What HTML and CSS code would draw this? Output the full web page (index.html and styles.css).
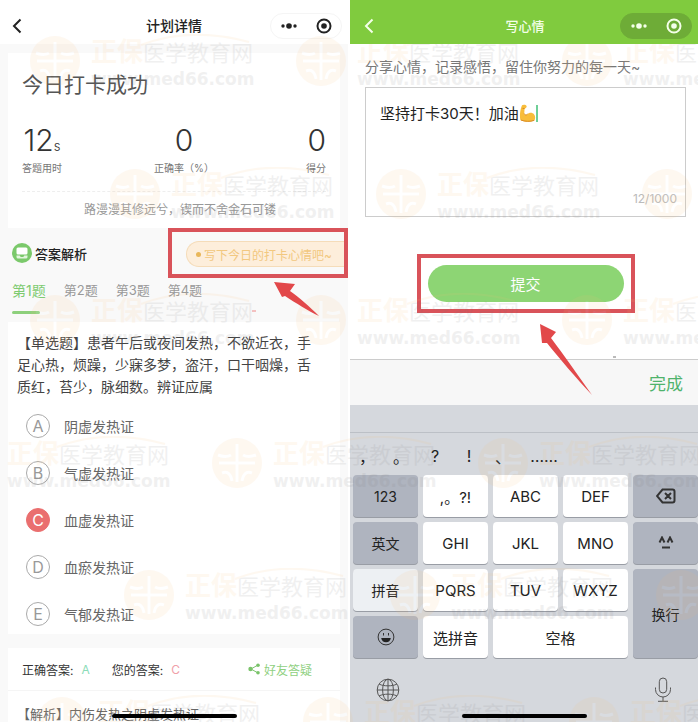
FILE: index.html
```html
<!DOCTYPE html>
<html lang="zh-CN">
  <head>
    <meta charset="UTF-8" />
    <meta name="viewport" content="width=device-width, initial-scale=1.0" />
    <title>打卡心情</title>
    <link rel="stylesheet" href="styles.css" />
  </head>
  <body>
    <div class="screens">
      <section class="screen plan">
        <header class="navbar">
          <button class="back" aria-label="返回">
            <svg width="10" height="16" viewBox="0 0 10 16"><path d="M8.500 1.500L2 8l6.500 6.500" /></svg>
          </button>
          <h1>计划详情</h1>
          <div class="capsule">
            <button aria-label="更多">
              <svg width="18" height="8" viewBox="0 0 18 8"><circle cx="3" cy="4" r="1.700" /><circle cx="9" cy="4" r="2.800" /><circle cx="15" cy="4" r="1.700" /></svg>
            </button>
            <button aria-label="关闭">
              <svg width="16" height="16" viewBox="0 0 16 16"><circle class="ring" cx="8" cy="8" r="6.500" /><circle cx="8" cy="8" r="2.800" /></svg>
            </button>
          </div>
        </header>

        <main class="plan-body">
          <div class="card result">
            <h2>今日打卡成功</h2>
            <div class="stats">
              <div class="stat"><p class="num">12<small>s</small></p><p class="label">答题用时</p></div>
              <div class="stat"><p class="num">0</p><p class="label">正确率（%）</p></div>
              <div class="stat right"><p class="num">0</p><p class="label">得分</p></div>
            </div>
            <p class="quote">路漫漫其修远兮，锲而不舍金石可镂</p>
          </div>

          <div class="analysis">
            <svg width="20" height="20" viewBox="0 0 20 20">
              <circle cx="10" cy="10" r="10" fill="#7bc96b" />
              <rect x="4.500" y="4.500" width="11" height="7" rx="1.500" fill="#fff" />
              <path d="M4.500 12.500h3.200l1 1.500h2.600l1-1.500h3.200v1.500a1.500 1.500 0 0 1-1.500 1.500H6a1.500 1.500 0 0 1-1.500-1.500z" fill="#e2f5dd" />
            </svg>
            <h3>答案解析</h3>
            <div class="marked mood-box">
              <button class="mood"><i></i>写下今日的打卡心情吧~</button>
            </div>
            <svg class="arrow arrow-mood" width="70" height="40" viewBox="0 0 70 40">
              <path d="M24 5l21 2-5 7c9 6 20 16 29 25-11-5-23-13-34-20l-3 1z" fill="#e2484a" />
              <path d="M2 34h4" stroke="#e88" />
            </svg>
          </div>

          <nav class="tabs">
            <a class="active" href="#q1">第1题</a>
            <a href="#q2">第2题</a>
            <a href="#q3">第3题</a>
            <a href="#q4">第4题</a>
          </nav>

          <div class="card question" id="q1">
            <p class="stem">【单选题】患者午后或夜间发热，不欲近衣，手足心热，烦躁，少寐多梦，盗汗，口干咽燥，舌质红，苔少，脉细数。辨证应属</p>
            <ul class="options">
              <li><button><b>A</b>阴虚发热证</button></li>
              <li><button><b>B</b>气虚发热证</button></li>
              <li><button class="wrong"><b>C</b>血虚发热证</button></li>
              <li><button><b>D</b>血瘀发热证</button></li>
              <li><button><b>E</b>气郁发热证</button></li>
            </ul>
          </div>

          <div class="card answer">
            <div class="answer-row">
              <span>正确答案:</span><em class="ok">A</em>
              <span>您的答案:</span><em class="bad">C</em>
              <a class="share" href="#share">
                <svg width="12" height="12" viewBox="0 0 12 12"><path d="M10 2L3 6l7 4" fill="none" stroke="#7ac36a" /><circle cx="2.500" cy="6" r="2.200" /><circle cx="10" cy="2.200" r="1.800" /><circle cx="10" cy="9.800" r="1.800" /></svg>
                好友答疑
              </a>
            </div>
            <p class="explain">【解析】内伤发热之阴虚发热证</p>
          </div>
        </main>
        <span class="home-bar"></span>
      </section>

      <section class="screen write">
        <header class="navbar green">
          <button class="back" aria-label="返回">
            <svg width="10" height="16" viewBox="0 0 10 16"><path d="M8.500 1.500L2 8l6.500 6.500" /></svg>
          </button>
          <h1>写心情</h1>
          <div class="capsule">
            <button aria-label="更多">
              <svg width="18" height="8" viewBox="0 0 18 8"><circle cx="3" cy="4" r="1.700" /><circle cx="9" cy="4" r="2.800" /><circle cx="15" cy="4" r="1.700" /></svg>
            </button>
            <button aria-label="关闭">
              <svg width="16" height="16" viewBox="0 0 16 16"><circle class="ring" cx="8" cy="8" r="6.500" /><circle cx="8" cy="8" r="2.800" /></svg>
            </button>
          </div>
        </header>

        <main class="write-body">
          <label for="mood">分享心情，记录感悟，留住你努力的每一天~</label>
          <div class="field">
            <textarea id="mood">坚持打卡30天！加油</textarea>
            <svg class="muscle" width="20" height="19" viewBox="0 0 20 19">
              <path d="M3 1.200C4.500.2 7 .6 7.600 2c.4 1.200-.6 2.300-2 2.500L5.200 10c.8 1.300 2.200 1.300 3.200.2 1.600-2 5-2 6.600 0 1.500 2 1.500 4.600.3 6.300-4 1.800-10.500 1.700-13.800-.5C.3 12 1.200 5.500 3 1.200z" fill="#f8bd3a" />
              <path d="M5.200 9.500c.6 1.800 2.200 1.800 3.300.6M3.600 4.400l2 .1M1.800 16c4 1.600 9.500 1.800 13.400.4" fill="none" stroke="#d98a24" />
              <path d="M18 1v17" stroke="#6fcf97" stroke-width="2" />
            </svg>
            <span class="count">12/1000</span>
          </div>
          <div class="marked submit-box">
            <button class="submit">提交</button>
          </div>
          <svg class="arrow arrow-submit" width="80" height="74" viewBox="0 0 80 74">
            <path d="M0 0l16 8-5 6c12 16 27 37 41 57C36 54 20 35 7 19l-5 0z" fill="#e2484a" />
            <path d="M73 33h3" stroke="#777" />
          </svg>
        </main>

        <div class="toolbar"><button>完成</button></div>
        <div class="keyboard">
          <div class="candidates">
            <button>，</button><button>。</button><button>?</button><button>!</button><button>、</button><button>……</button>
          </div>
          <div class="keys">
            <button class="dark">123</button>
            <button>,。?!</button>
            <button>ABC</button>
            <button>DEF</button>
            <button class="dark" aria-label="删除">
              <svg width="20" height="16" viewBox="0 0 20 16"><path d="M6.500 1.500h10a2 2 0 0 1 2 2v9a2 2 0 0 1-2 2h-10L1 8zM9 5l6 6M15 5l-6 6" /></svg>
            </button>
            <button class="dark">英文</button>
            <button>GHI</button>
            <button>JKL</button>
            <button>MNO</button>
            <button class="dark" aria-label="颜文字">
              <svg width="16" height="14" viewBox="0 0 16 14"><path d="M1.500 6.500L4 1.500l2.500 5M9.500 6.500L12 1.500l2.500 5M4 11.500h8" /></svg>
            </button>
            <button class="light">拼音</button>
            <button>PQRS</button>
            <button>TUV</button>
            <button>WXYZ</button>
            <button class="dark enter">换行</button>
            <button class="dark" aria-label="表情">
              <svg class="smile" width="18" height="18" viewBox="0 0 18 18"><circle cx="9" cy="9" r="7.900" /><path d="M4.200 10h9.600c-.4 2.800-2.200 4.300-4.800 4.300S4.600 12.800 4.200 10z" fill="#222" stroke="none" /><path d="M6.500 5v2.500M11.500 5v2.500" /></svg>
            </button>
            <button>选拼音</button>
            <button class="space">空格</button>
          </div>
          <div class="bottom-keys">
            <button aria-label="切换键盘">
              <svg width="24" height="24" viewBox="0 0 24 24"><circle cx="12" cy="12" r="10.800" /><ellipse cx="12" cy="12" rx="5.400" ry="10.800" /><path d="M12 1v22M1.200 12h21.600M3.200 6.200c5 2.200 12.600 2.200 17.600 0M3.200 17.800c5-2.200 12.600-2.200 17.600 0" /></svg>
            </button>
            <button aria-label="语音">
              <svg width="18" height="26" viewBox="0 0 18 26"><rect x="5.300" y="1" width="7.400" height="15" rx="3.700" /><path d="M1.500 10.500v2a7.500 7.500 0 0 0 15 0v-2M9 20v4M4 24.300h10" /></svg>
            </button>
          </div>
        </div>
        <span class="home-bar"></span>
      </section>

      <div class="watermarks" aria-hidden="true"></div>
    </div>

    <template id="mark">
      <div class="mark">
        <svg width="50" height="50" viewBox="0 0 50 50">
          <circle cx="25" cy="25" r="25" fill="#f9bd74" />
          <path d="M25 6v38M7 25h36M6 17q8 3 13 0M44 17q-8 3-13 0M10 35q8-3 10 8M40 35q-8-3-10 8" fill="none" stroke="#fff" stroke-width="3" />
        </svg>
        <div>
          <p class="brand"><b>正保</b>医学教育网</p>
          <p class="site">www.med66.com</p>
        </div>
        <svg class="swoosh" width="110" height="12" viewBox="0 0 110 12"><path d="M1 11Q50-8 109 8" fill="none" stroke="#f9bd74" stroke-width="2" /></svg>
      </div>
    </template>

    <script>
      let layer = document.querySelector(".watermarks");
      let mark = document.querySelector("#mark");

      // each row of marks starts at a different place
      ["a", "b", "a", "c", "d", "e"].forEach((name) => {
        let row = document.createElement("div");
        row.className = "mark-row row-" + name;
        for (let i = 0; i < 3; i++) {
          row.appendChild(mark.content.cloneNode(true));
        }
        layer.appendChild(row);
      });
    </script>
  </body>
</html>
```
FILE: styles.css
```css
* {
  box-sizing: border-box;
}

body {
  margin: 0;
  background: #fff;
  color: #444;
  font-family: Inter, "Noto Sans CJK SC", sans-serif;
  font-size: 14px;
}

h1, h2, h3, p, ul {
  margin: 0;
  padding: 0;
  font-weight: 400;
}

button {
  padding: 0;
  border: none;
  background: none;
  color: inherit;
  font: inherit;
  cursor: pointer;
}

a {
  color: inherit;
  text-decoration: none;
}

svg {
  display: block;
  flex: none;
}

.screens {
  position: relative;
  display: grid;
  grid-template-columns: 1fr 1fr;
  column-gap: 2px;
  height: 100vh;
  min-height: 722px;
  overflow: hidden;
}

.screen {
  position: relative;
  display: flex;
  flex-direction: column;
  min-width: 0;
  overflow: hidden;
}

/* top bar */
.navbar {
  display: grid;
  grid-template-columns: 78px 1fr 78px;
  align-items: center;
  height: 44px;
  padding-top: 8px;
  flex: none;
  background: #fff;
  color: #222;
}

.navbar h1 {
  font-size: 14px;
  font-weight: 500;
  line-height: 16px;
  text-align: center;
}

.back {
  justify-self: start;
  padding-left: 12px;
}

.back path {
  fill: none;
  stroke: currentColor;
  stroke-width: 2;
}

.capsule {
  display: flex;
  align-items: center;
  justify-content: space-around;
  width: 72px;
  height: 26px;
  border: 1px solid #f5f5f5;
  border-radius: 13px;
}

.capsule svg {
  fill: currentColor;
}

.capsule .ring {
  fill: none;
  stroke: currentColor;
  stroke-width: 2;
}

.green {
  position: relative;
  z-index: 3;
  padding-left: 2px;
  background: #80cb3e;
  color: #f4ffe9;
}

.green h1 {
  font-size: 13px;
}

.green .capsule {
  border-color: #6eac37;
  background: #6eac37;
}

/* plan details */
.plan {
  background: #f9f9f9;
}

.plan-body {
  padding: 9px 8px 0;
}

.card {
  background: #fff;
}

.result {
  height: 175px;
  padding: 16px 14px 0;
}

.result h2 {
  color: #555;
  font-size: 21px;
  line-height: 32px;
}

.stats {
  display: flex;
  justify-content: space-between;
  padding: 20px 0 14px;
  border-bottom: 1px dashed #eee;
  text-align: center;
}

.right {
  text-align: right;
}

.num {
  color: #333;
  font-size: 30px;
  font-weight: 300;
  line-height: 38px;
}

.num small {
  font-size: 13px;
  line-height: 1;
}

.label {
  color: #777;
  font-size: 10px;
  line-height: 18px;
}

.quote {
  padding-left: 12px;
  color: #999;
  font-size: 12px;
  line-height: 36px;
  text-align: center;
}

.analysis {
  position: relative;
  display: flex;
  align-items: center;
  gap: 3px;
  margin-right: -8px;
  padding-left: 4px;
}

.analysis h3 {
  color: #222;
  font-size: 13px;
  font-weight: 500;
}

.marked {
  border: 4px solid #d9535a;
}

.mood-box {
  width: 180px;
  margin-left: auto;
  padding: 9px 0 7px 14px;
}

.mood {
  display: flex;
  align-items: center;
  gap: 3px;
  width: 100%;
  height: 26px;
  padding-left: 9px;
  border: 1px solid #f5dcb9;
  border-right: none;
  border-radius: 13px 0 0 13px;
  background: #fdeedb;
  color: #f2c880;
  font-size: 12px;
  white-space: nowrap;
}

.mood i {
  width: 5px;
  height: 5px;
  border-radius: 50%;
  background: #e9b75a;
}

.arrow {
  position: absolute;
  z-index: 3;
}

.arrow-mood {
  top: 49px;
  right: 28px;
}

.tabs {
  display: flex;
  gap: 18px;
  height: 44px;
  padding: 1px 4px 0;
  color: #999;
  font-size: 13px;
  line-height: 22px;
}

.tabs .active {
  color: #7ecb71;
  font-size: 14px;
  line-height: 24px;
}

.tabs .active::after {
  content: "";
  display: block;
  width: 28px;
  height: 3px;
  margin-top: 8px;
  border-radius: 2px;
  background: #8dd07c;
}

.question {
  height: 312px;
  padding: 10px 20px 0 9px;
}

.stem {
  line-height: 22px;
}

.options {
  list-style: none;
  padding: 16px 0 0 9px;
}

.options li {
  height: 47px;
}

.options button {
  display: flex;
  align-items: center;
  gap: 14px;
  color: #666;
}

.options b {
  width: 24px;
  height: 24px;
  border: 1px solid #aaa;
  border-radius: 50%;
  color: #999;
  font-size: 16px;
  font-weight: 400;
  line-height: 22px;
}

.options .wrong b {
  border-color: #ea6f6f;
  background: #ea6f6f;
  color: #fff;
}

.answer {
  height: 90px;
  margin-top: 14px;
}

.answer-row {
  display: flex;
  align-items: center;
  height: 43px;
  padding: 0 28px 0 14px;
  border-bottom: 1px solid #f5f5f5;
  color: #333;
  font-size: 12px;
}

.answer-row em {
  margin: 0 22px 0 8px;
  font-style: normal;
}

.ok {
  color: #8bdcb8;
}

.bad {
  color: #f0a0a8;
}

.share {
  display: flex;
  align-items: center;
  gap: 4px;
  margin-left: auto;
  color: #8fd07f;
}

.share svg {
  fill: #7ac36a;
}

.explain {
  padding: 12px 9px 0;
  color: #666;
  font-size: 13px;
  line-height: 22px;
}

.home-bar {
  position: absolute;
  z-index: 3;
  bottom: 4px;
  left: 50%;
  width: 125px;
  height: 4px;
  margin-left: -62px;
  border-radius: 2px;
  background: #000;
}

/* write mood */
.write-body {
  position: relative;
  flex: 1;
  padding: 12px 12px 0 15px;
}

.write-body label {
  display: block;
  color: #777;
  line-height: 22px;
}

.field {
  position: relative;
  height: 130px;
  margin-top: 9px;
}

.field textarea {
  display: block;
  width: 100%;
  height: 100%;
  padding: 14px;
  border: 1px solid #ccc;
  outline: none;
  background: #fff;
  color: #222;
  font: inherit;
  font-size: 15px;
  line-height: 24px;
  resize: none;
}

.muscle {
  position: absolute;
  top: 17px;
  left: 154px;
}

.count {
  position: absolute;
  right: 9px;
  bottom: 11px;
  color: #bbb;
  font-size: 12px;
}

.submit-box {
  width: 218px;
  margin: 37px auto 0;
  padding: 7px;
}

.submit {
  display: block;
  width: 100%;
  height: 37px;
  border-radius: 19px;
  background: #8dd574;
  color: #fff;
  font-size: 15px;
}

.arrow-submit {
  top: 280px;
  left: 190px;
}

.toolbar {
  display: flex;
  justify-content: flex-end;
  height: 46px;
  padding-right: 15px;
  border-top: 1px solid #ccc;
  background: #f7f7f7;
  color: #4fb36c;
  font-size: 17px;
}

.keyboard {
  background: #d5d8dd;
  color: #222;
}

.candidates {
  display: flex;
  height: 43px;
  margin-top: 27px;
  border-top: 1px solid #bcc0c6;
  font-size: 16px;
}

.candidates button {
  width: 34px;
  padding-top: 4px;
}

.candidates button:last-child {
  width: 48px;
}

.keys {
  display: grid;
  grid-template-columns: repeat(5, 1fr);
  grid-auto-rows: 42px;
  gap: 5px;
  padding-left: 3px;
}

.keys button {
  display: flex;
  align-items: center;
  justify-content: center;
  border-radius: 4px;
  background: #fff;
  box-shadow: 0 1px 0 #999da5;
  font-size: 15px;
}

.keys svg,
.bottom-keys svg {
  fill: none;
  stroke: #333;
  stroke-width: 2;
}

.keys .smile {
  stroke-width: 1;
}

.keys .dark {
  background: #afb4bf;
  font-size: 14px;
}

.keys .light {
  background: #edf0f3;
  font-size: 14px;
}

.keys .enter {
  grid-row: span 2;
}

.keys .space {
  grid-column: span 2;
}

.bottom-keys {
  display: flex;
  justify-content: space-between;
  height: 64px;
  padding: 0 26px;
}

.bottom-keys svg {
  stroke: #555;
  stroke-width: 1;
}

/* watermark layer */
.watermarks {
  position: absolute;
  z-index: 2;
  inset: 0;
  display: grid;
  grid-template-rows: 133px 126px 143px 132px 127px 50px;
  padding-top: 36px;
  overflow: hidden;
  opacity: 0.1;
  pointer-events: none;
}

.mark-row {
  display: flex;
}

.row-a {
  margin-left: 30px;
}

.row-b {
  margin-left: 110px;
}

.row-c {
  margin-left: -54px;
}

.row-d {
  margin-left: 124px;
}

.row-e {
  margin-left: 37px;
}

.mark {
  position: relative;
  display: flex;
  flex: none;
  gap: 11px;
  width: 266px;
  height: 50px;
  color: #777;
  white-space: nowrap;
}

.brand {
  font-size: 22px;
  line-height: 32px;
}

.brand b {
  color: #f9bd74;
  font-size: 26px;
}

.site {
  font-family: "DejaVu Sans", sans-serif;
  font-size: 17px;
  font-weight: 700;
  line-height: 20px;
}

.swoosh {
  position: absolute;
  top: -2px;
  left: 110px;
}
```
